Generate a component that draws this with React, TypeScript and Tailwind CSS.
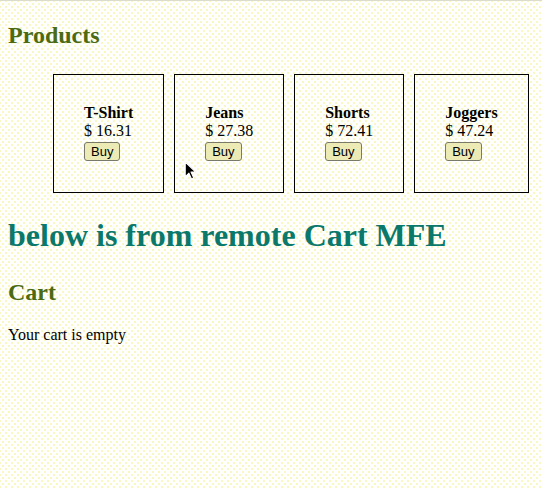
const products = [
  { name: "T-Shirt", price: "16.31" },
  { name: "Jeans", price: "27.38" },
  { name: "Shorts", price: "72.41" },
  { name: "Joggers", price: "47.24" },
];

const ProductCard = ({ name, price }: { name: string; price: string }) => (
  <div className="flex flex-col items-start border border-black px-[30px] pt-[29px] pb-[31px]">
    <div className="text-[16px] leading-[18.4px] font-bold">{name}</div>
    <div className="text-[16px] leading-[18.4px]">$ {price}</div>
    <button className="mt-[1px] rounded-[3px] border border-[#7a7a6a] bg-[#ecebb6] px-[6px] py-px font-['Liberation_Sans',Arial,sans-serif] text-[13px] leading-[15px] text-black">
      Buy
    </button>
  </div>
);

const Cursor = () => (
  <svg
    className="absolute left-[184px] top-[160px]"
    width="13"
    height="20"
    viewBox="0 0 12 19"
  >
    <path
      d="M1 1 L1 15 L4.5 11.5 L7 17 L9 16 L6.5 10.5 L11 10.5 Z"
      fill="#000"
      stroke="#fff"
      strokeWidth="1"
      strokeLinejoin="round"
    />
  </svg>
);

export default function App() {
  return (
    <div className="relative min-h-[488px] border-t border-[#dcdccc] bg-[#fffffd] bg-[radial-gradient(circle,#f6f3a4_0.6px,transparent_0.9px),radial-gradient(circle,#f6f3a4_0.6px,transparent_0.9px)] bg-[length:6px_6px] bg-[position:0_0,3px_3px] px-2 pt-[20px] font-['Liberation_Serif','Times_New_Roman',serif] text-black">
      <h2 className="text-[24px] leading-[28px] font-bold text-[#4b6a12]">Products</h2>

      <div className="mt-[25px] ml-[45px] flex gap-[10px]">
        {products.map((p) => (
          <ProductCard key={p.name} name={p.name} price={p.price} />
        ))}
      </div>

      <h1 className="mt-[24px] text-[32px] leading-[37px] font-bold text-[#0b786c]">
        below is from remote Cart MFE
      </h1>
      <h2 className="mt-[24px] text-[24px] leading-[28px] font-bold text-[#4b6a12]">Cart</h2>
      <p className="mt-[20px] text-[16px] leading-[18px]">Your cart is empty</p>

      <Cursor />
    </div>
  );
}
